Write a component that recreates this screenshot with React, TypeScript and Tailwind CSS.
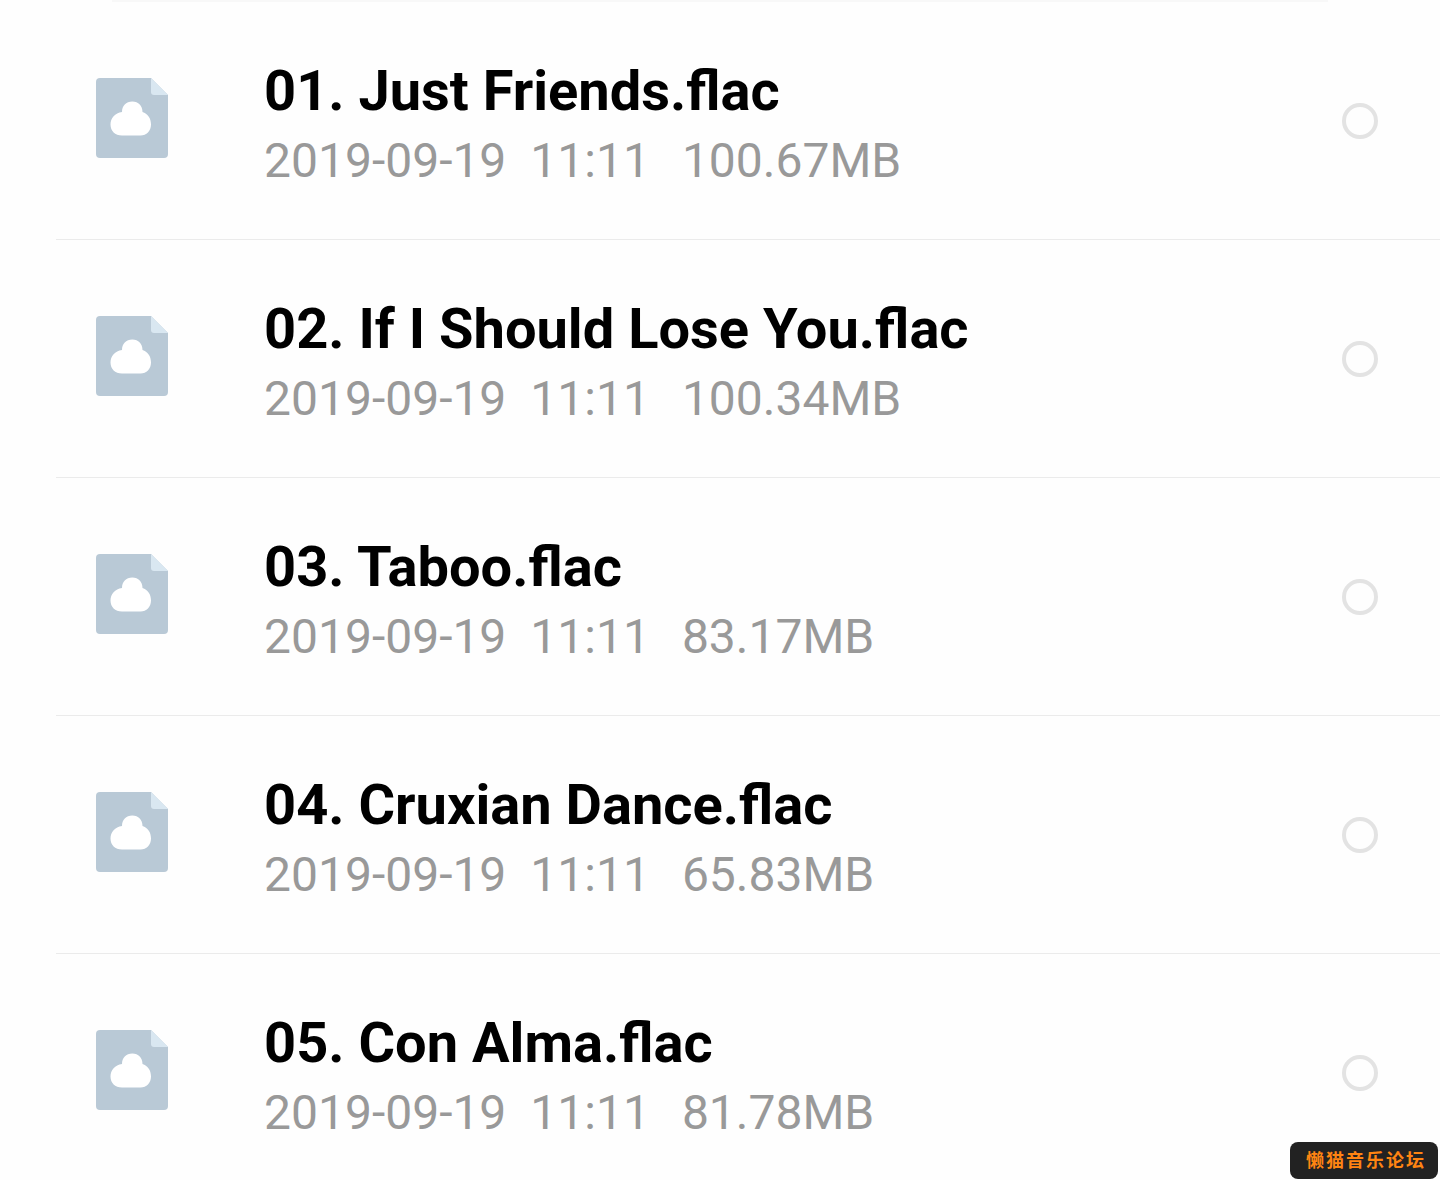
interface Track {
  name: string;
  date: string;
  time: string;
  size: string;
}

const tracks: Track[] = [
  { name: '01. Just Friends.flac', date: '2019-09-19', time: '11:11', size: '100.67MB' },
  { name: '02. If I Should Lose You.flac', date: '2019-09-19', time: '11:11', size: '100.34MB' },
  { name: '03. Taboo.flac', date: '2019-09-19', time: '11:11', size: '83.17MB' },
  { name: '04. Cruxian Dance.flac', date: '2019-09-19', time: '11:11', size: '65.83MB' },
  { name: '05. Con Alma.flac', date: '2019-09-19', time: '11:11', size: '81.78MB' },
];

export default function App() {
  return (
    <main className="min-h-screen overflow-x-hidden bg-[#fefefe] font-['Roboto',sans-serif]">
      <div className="mx-28 h-0.5 bg-[#f8f8f8]" />
      <ul>
        {tracks.map((track) => (
          <TrackRow key={track.name} track={track} />
        ))}
      </ul>
      <Watermark />
    </main>
  );
}

function TrackRow({ track }: { track: Track }) {
  return (
    <li className="ml-14 border-b border-[#ebebeb] last:border-b-0">
      <label className="flex h-[237px] items-center pr-[62px] pl-10">
        <FileIcon />
        <span className="ml-24 flex min-w-0 flex-1 flex-col pt-2">
          <span className="text-[56px] leading-[72px] font-bold text-black">{track.name}</span>
          <span className="flex text-[48px] leading-[68px] text-[#999999]">
            <span>{track.date}</span>
            <span className="ml-6">{track.time}</span>
            <span className="ml-8">{track.size}</span>
          </span>
        </span>
        <input
          type="checkbox"
          className="size-9 shrink-0 appearance-none rounded-full border-4 border-[#e3e3e3] checked:bg-[#b8c8d6]"
        />
      </label>
    </li>
  );
}

function FileIcon() {
  return (
    <svg className="mb-1.5 h-20 w-[72px] shrink-0" viewBox="0 0 72 80" aria-hidden="true">
      <path d="M4 0H55L72 17V76a4 4 0 0 1-4 4H4a4 4 0 0 1-4-4V4a4 4 0 0 1 4-4Z" fill="#b9c9d6" />
      <path d="M55 0L72 17H58a3 3 0 0 1-3-3Z" fill="#d9e7f1" />
      <path
        d="M26 57.5C19 57.5 14.5 53 14.5 46.5C14.5 40 19 35 26 34C26 28 30 23.5 36.3 23.5C42.500 23.5 46.500 28 46.500 34C51.500 35.500 55 40 55 46.500C55 53 50.500 57.5 44.500 57.500Z"
        fill="#fff"
      />
    </svg>
  );
}

function Watermark() {
  return (
    <div className="fixed right-0.5 bottom-px flex h-[37px] w-[148px] items-center justify-center rounded-lg bg-[#222222] pb-1 pl-1 font-['Noto_Sans_CJK_SC',sans-serif] text-lg font-bold tracking-[2px] text-[#ff8412]">
      懒猫音乐论坛
    </div>
  );
}
